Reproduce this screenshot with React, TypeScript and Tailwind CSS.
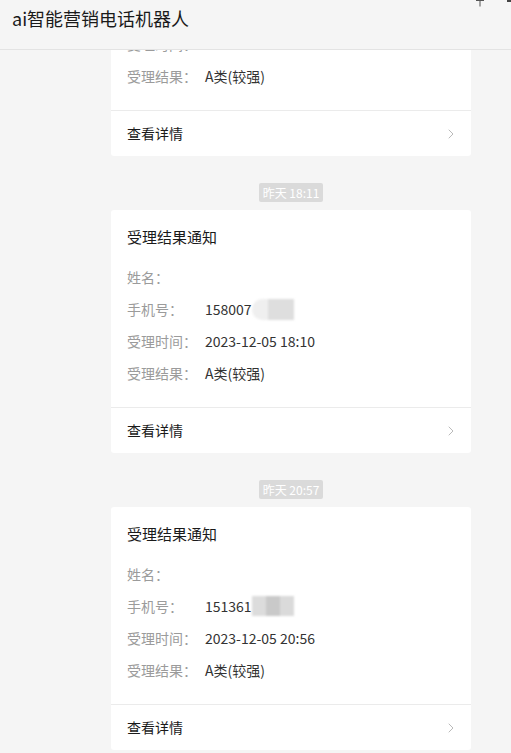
import { ChevronRight } from 'lucide-react';

interface Notice {
  time: string;
  phone: string;
  blur: 'a' | 'b';
  handled: string;
  result: string;
}

const NOTICES: Notice[] = [
  { time: '', phone: '', blur: 'a', handled: '2023-12-05 17:40', result: 'A类(较强)' },
  { time: '昨天 18:11', phone: '158007', blur: 'a', handled: '2023-12-05 18:10', result: 'A类(较强)' },
  { time: '昨天 20:57', phone: '151361', blur: 'b', handled: '2023-12-05 20:56', result: 'A类(较强)' },
];

const FONT = { fontFamily: '"Noto Sans CJK SC", "Noto Sans", sans-serif' };

// masked part of the phone number
function Mosaic({ kind }: { kind: 'a' | 'b' }) {
  if (kind === 'a') {
    return (
      <span className="inline-flex h-[21px] w-[42px] blur-[1px] align-middle">
        <span className="w-[16px] rounded-l-full bg-[#efefef]" />
        <span className="flex-1 bg-[#dedede]" />
      </span>
    );
  }
  return (
    <span className="inline-flex h-[20px] w-[42px] blur-[1px] align-middle">
      <span className="flex-1 bg-[#dcdcdc]" />
      <span className="flex-1 bg-[#c9c9c9]" />
      <span className="flex-1 bg-[#dadada]" />
    </span>
  );
}

function Row({ label, children }: { label: string; children?: React.ReactNode }) {
  return (
    <div className="flex h-[32px] items-center text-[14px]">
      <span className="w-[78px] text-[#9b9b9b]">{label}</span>
      <span className="flex items-center text-[#333]">{children}</span>
    </div>
  );
}

function NoticeCard({ n }: { n: Notice }) {
  return (
    <div className="w-[360px] rounded-[3px] bg-white">
      <div className="px-4 pt-[17px] pb-[18px]">
        <div className="h-[20px] text-[15px] leading-[20px] text-[#1a1a1a]">受理结果通知</div>
        <div className="mt-[14px]">
          <Row label="姓名：" />
          <Row label="手机号：">
            {n.phone}
            {n.phone && <Mosaic kind={n.blur} />}
          </Row>
          <Row label="受理时间：">{n.handled}</Row>
          <Row label="受理结果：">{n.result}</Row>
        </div>
      </div>
      <div className="flex h-[46px] items-center justify-between border-t border-[#ebebeb] pl-4 pr-[12px] text-[14px] text-[#1a1a1a]">
        <span>查看详情</span>
        <ChevronRight className="h-[16px] w-[16px] text-[#b5b5b5]" strokeWidth={1.4} />
      </div>
    </div>
  );
}

export default function App() {
  return (
    <div className="h-[753px] w-[511px] overflow-hidden bg-[#f5f5f5]" style={FONT}>
      {/* Header */}
      <div className="relative flex h-[50px] items-start border-b border-[#e3e3e3] bg-[#f5f5f5] pl-3 pt-[6px]">
        <h1 className="text-[18px] leading-[24px] text-[#1a1a1a]">ai智能营销电话机器人</h1>
        <svg className="absolute left-[474px] top-[-6px]" width="12" height="13" viewBox="0 0 12 13">
          <path d="M2 6.5 H10 M6 6.5 V12.5 M3.5 0.5 V6.5 M8.5 0.5 V6.5" stroke="#555" strokeWidth="1" fill="none" />
        </svg>
        <div className="absolute left-[507px] top-0 h-[2px] w-[4px] bg-[#444]" />
      </div>

      {/* Messages, scrolled so the first card is partly out of view */}
      <div className="h-[703px] overflow-hidden">
        <div className="-mt-[137px] flex flex-col pl-[111px]">
          {NOTICES.map((n, i) => (
            <div key={i} className="flex flex-col items-start">
              {n.time && (
                <div className="flex w-[360px] justify-center pt-[27px] pb-[8px]">
                  <span className="h-[19px] rounded-[2px] bg-[#dadada] px-[4px] text-[12px] leading-[19px] text-white">
                    {n.time}
                  </span>
                </div>
              )}
              <NoticeCard n={n} />
            </div>
          ))}
        </div>
      </div>
    </div>
  );
}
